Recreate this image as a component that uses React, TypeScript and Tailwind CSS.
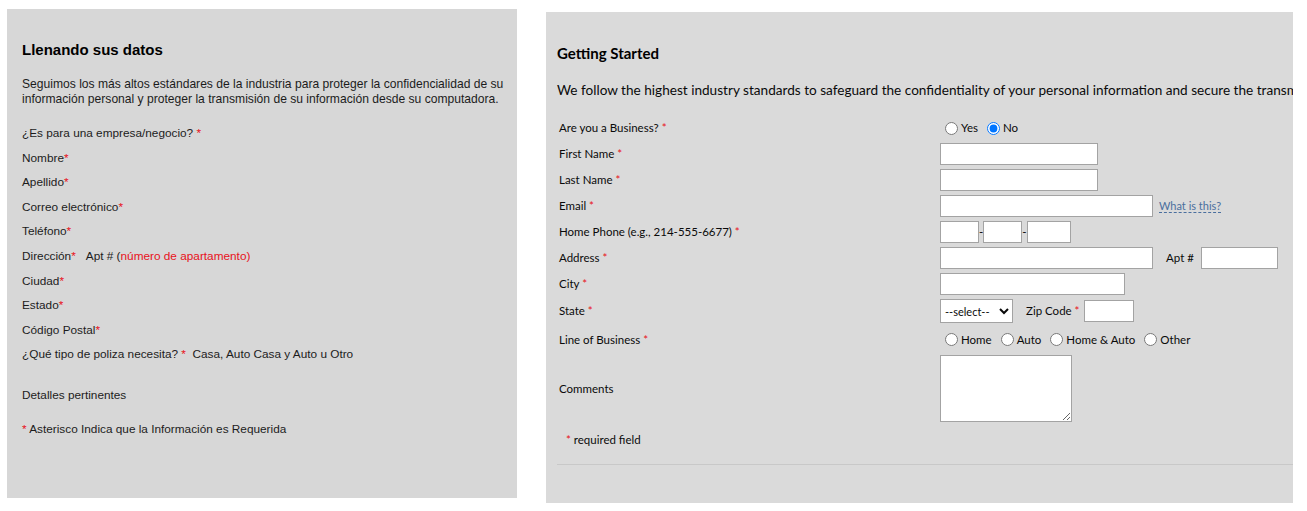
import React from 'react'

const Star = () => <span className="text-[#e8121b]">*</span>

// left column: spanish info box
function InfoBox() {
  const rows: React.ReactNode[] = [
    <>¿Es para una empresa/negocio? <Star /></>,
    <>Nombre<Star /></>,
    <>Apellido<Star /></>,
    <>Correo electrónico<Star /></>,
    <>Teléfono<Star /></>,
    <>
      Dirección<Star />
      <span className="ml-[10px]">Apt # (</span>
      <span className="text-[#e8121b]">número de apartamento)</span>
    </>,
    <>Ciudad<Star /></>,
    <>Estado<Star /></>,
    <>Código Postal<Star /></>,
    <>¿Qué tipo de poliza necesita? <Star />&nbsp; Casa, Auto Casa y Auto u Otro</>,
  ]

  return (
    <div
      className="ml-[7px] mt-[9px] h-[489px] w-[510px] shrink-0 bg-[#d7d7d7] pl-[15px] pr-[4px] pt-[31px] text-[#1c1c1c]"
      style={{ fontFamily: '"Liberation Sans", Arial, sans-serif' }}
    >
      <h2 className="text-[15px] font-bold leading-[20px] text-black">Llenando sus datos</h2>
      <p className="mt-[17px] text-[12.1px] leading-[15px]">
        Seguimos los más altos estándares de la industria para proteger la confidencialidad de su
        información personal y proteger la transmisión de su información desde su computadora.
      </p>
      <div className="mt-[14px] text-[11.8px] leading-[24.6px]">
        {rows.map((r, i) => (
          <div key={i}>{r}</div>
        ))}
      </div>
      <div className="mt-[16px] text-[11.8px] leading-[24.6px]">Detalles pertinentes</div>
      <div className="mt-[9px] text-[11.8px] leading-[24.6px]">
        <Star /> Asterisco Indica que la Información es Requerida
      </div>
    </div>
  )
}

const boxCls = 'h-[22px] border border-[#a3a3a3] bg-white px-1 text-[12px] outline-none'

function Radio({ label, checked }: { label: string; checked?: boolean }) {
  return (
    <label className="mr-[4px] flex items-center">
      <input type="radio" defaultChecked={checked} className="m-0 ml-[5px] mr-[3px] h-[13px] w-[13px]" />
      <span>{label}</span>
    </label>
  )
}

function Row({ label, children, h = 'h-[26px]' }: { label: React.ReactNode; children: React.ReactNode; h?: string }) {
  return (
    <div className={`grid grid-cols-[383px_1fr] items-center ${h}`}>
      <div className="pl-[2px]">{label}</div>
      <div className="flex items-center">{children}</div>
    </div>
  )
}

// right column: english quote form
function QuoteForm() {
  return (
    <div
      className="ml-[29px] mt-[12px] h-[491px] w-[747px] shrink-0 overflow-hidden bg-[#dadada] pl-[11px] pt-[31px] text-[#0a0a0a]"
      style={{ fontFamily: 'Lato, "Open Sans", sans-serif' }}
    >
      <h2 className="text-[15px] font-bold leading-[20px] text-black">Getting Started</h2>
      <p className="mt-[17px] whitespace-nowrap text-[13.6px] leading-[20px]">
        We follow the highest industry standards to safeguard the confidentiality of your personal information and secure the transmission of your information from your computer.
      </p>

      <div className="mt-[15px] text-[11.5px]">
        <Row label={<>Are you a Business? <Star /></>}>
          <Radio label="Yes" />
          <Radio label="No" checked />
        </Row>
        <Row label={<>First Name <Star /></>}>
          <input className={`${boxCls} w-[158px]`} />
        </Row>
        <Row label={<>Last Name <Star /></>}>
          <input className={`${boxCls} w-[158px]`} />
        </Row>
        <Row label={<>Email <Star /></>}>
          <input className={`${boxCls} w-[213px]`} />
          <span className="ml-[6px] border-b border-dashed border-[#4a6f9e] text-[11px] leading-[12px] text-[#4a6f9e]">What is this?</span>
        </Row>
        <Row label={<>Home Phone (e.g., 214-555-6677) <Star /></>}>
          <input className={`${boxCls} w-[39px]`} />
          <span className="w-[4px] text-center">-</span>
          <input className={`${boxCls} w-[39px]`} />
          <span className="w-[5px] text-center">-</span>
          <input className={`${boxCls} w-[44px]`} />
        </Row>
        <Row label={<>Address <Star /></>}>
          <input className={`${boxCls} w-[213px]`} />
          <span className="ml-[13px] mr-[7px]">Apt #</span>
          <input className={`${boxCls} w-[77px]`} />
        </Row>
        <Row label={<>City <Star /></>}>
          <input className={`${boxCls} w-[185px]`} />
        </Row>
        <Row label={<>State <Star /></>} h="h-[28px]">
          <select className="h-[24px] w-[73px] border border-[#a3a3a3] bg-white text-[11px]">
            <option>--select--</option>
          </select>
          <span className="ml-[13px] mr-[5px]">
            Zip Code <Star />
          </span>
          <input className={`${boxCls} w-[50px]`} />
        </Row>
        <Row label={<>Line of Business <Star /></>} h="h-[29px]">
          <Radio label="Home" />
          <Radio label="Auto" />
          <Radio label="Home &amp; Auto" />
          <Radio label="Other" />
        </Row>
        <Row label="Comments" h="h-[69px]">
          <textarea className="h-[67px] w-[132px] border border-[#a3a3a3] bg-white text-[12px] outline-none" />
        </Row>
        <div className="mt-[7px] pl-[9px] leading-[20px]">
          <Star /> required field
        </div>
      </div>
      <div className="mt-[14px] h-px bg-[#c8c8c8]" />
    </div>
  )
}

export default function App() {
  return (
    <div className="flex h-[511px] w-[1307px] overflow-hidden bg-white">
      <InfoBox />
      <QuoteForm />
    </div>
  )
}
